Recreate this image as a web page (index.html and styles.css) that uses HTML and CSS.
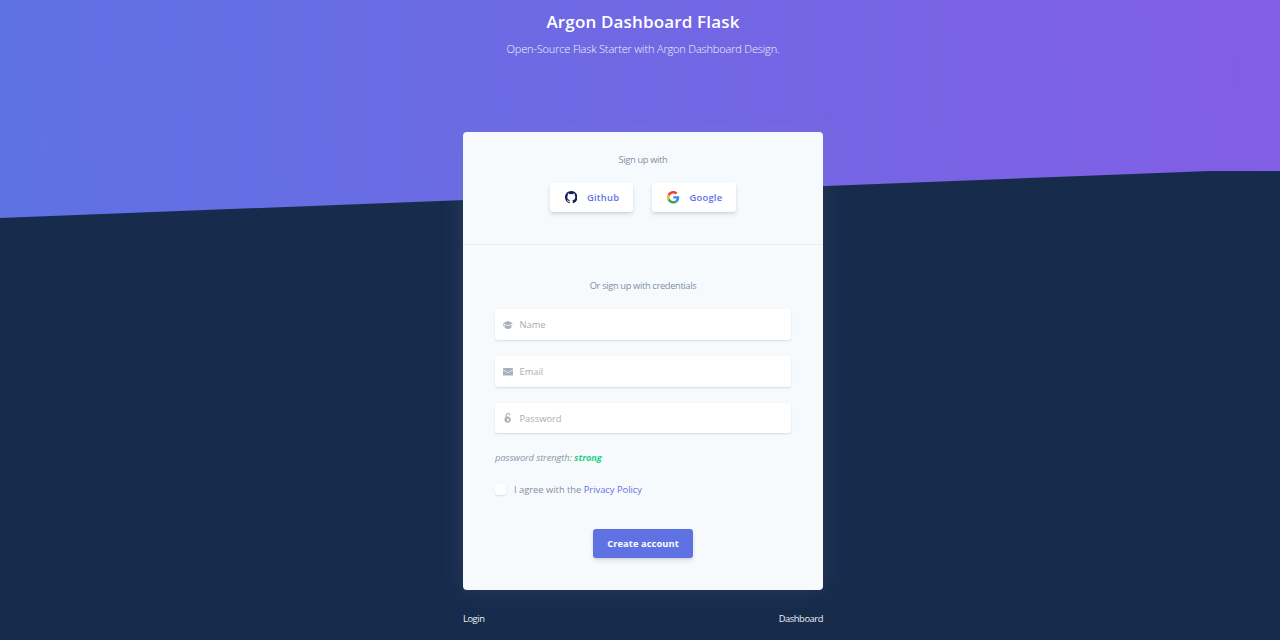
FILE: index.html
```html
<!DOCTYPE html>
<html lang="en">
<head>
<meta charset="utf-8">
<title>Argon Dashboard Flask</title>
<link rel="stylesheet" href="styles.css">
</head>
<body>
<div class="page">
  <header class="hero">
    <h1 class="hero-title">Argon Dashboard Flask</h1>
    <p class="hero-lead">Open-Source Flask Starter with Argon Dashboard Design.</p>
  </header>
  <main class="column">
    <section class="card">
      <div class="card-header">
        <p class="caption caption-signup">Sign up with</p>
        <div class="socials">
          <a class="social social-github">
            <svg class="social-icon" viewBox="0 0 16 16"><path fill="#161d5b" d="M8 0C3.58 0 0 3.58 0 8c0 3.54 2.29 6.53 5.47 7.59.4.07.55-.17.55-.38v-1.49c-2.01.37-2.53-.49-2.69-.94-.09-.23-.48-.94-.82-1.13-.28-.15-.68-.52-.01-.53.63-.01 1.08.58 1.23.82.72 1.21 1.87.87 2.33.66.07-.52.28-.87.51-1.07-1.78-.2-3.64-.89-3.64-3.95 0-.87.31-1.59.82-2.15-.08-.2-.36-1.02.08-2.12 0 0 .67-.21 2.2.82a7.42 7.42 0 0 1 4 0c1.53-1.04 2.2-.82 2.2-.82.44 1.1.16 1.92.08 2.12.51.56.82 1.27.82 2.15 0 3.07-1.87 3.75-3.65 3.95.29.25.54.73.54 1.48v2.2c0 .21.15.46.55.38A8.01 8.01 0 0 0 16 8c0-4.42-3.58-8-8-8z"/></svg>
            <span>Github</span>
          </a>
          <a class="social social-google">
            <svg class="social-icon" viewBox="0 0 48 48"><path fill="#ea4335" d="M24 9.5c3.54 0 6.71 1.22 9.21 3.6l6.85-6.85C35.9 2.38 30.47 0 24 0 14.62 0 6.51 5.38 2.56 13.22l7.98 6.19C12.43 13.72 17.74 9.5 24 9.5z"/><path fill="#4285f4" d="M46.98 24.55c0-1.57-.15-3.09-.38-4.55H24v9.02h12.94c-.58 2.96-2.26 5.48-4.78 7.18l7.73 6c4.51-4.18 7.09-10.36 7.09-17.65z"/><path fill="#fbbc05" d="M10.53 28.59a14.5 14.5 0 0 1 0-9.18l-7.98-6.19a24 24 0 0 0 0 21.56l7.98-6.19z"/><path fill="#34a853" d="M24 48c6.48 0 11.93-2.13 15.89-5.81l-7.73-6c-2.15 1.45-4.92 2.3-8.16 2.3-6.26 0-11.57-4.22-13.47-9.91l-7.98 6.19C6.51 42.62 14.62 48 24 48z"/></svg>
            <span>Google</span>
          </a>
        </div>
      </div>
      <form class="card-body">
        <p class="caption caption-or">Or sign up with credentials</p>
        <label class="field">
          <svg class="field-icon" viewBox="0 0 20 20"><path d="M10 2 0 6.500 10 11l10-4.500zM3 9.500v4.500C4.500 19 15.500 19 17 14V9.500l-7 3.200z"/><path d="M.5 7.500h1.800v5H.5z"/></svg>
          <span class="field-text">Name</span>
        </label>
        <label class="field">
          <svg class="field-icon" viewBox="0 0 20 20"><path d="M1 2h18q1 0 1 1v2.200l-10 5.600L0 5.200V3q0-1 1-1zM0 6.600l10 5.500 10-5.500V16q0 1-1 1H1q-1 0-1-1z"/></svg>
          <span class="field-text">Email</span>
        </label>
        <label class="field field-last">
          <svg class="field-icon" viewBox="0 0 20 20"><path fill-rule="evenodd" d="M5 8.500V5.500a5 5 0 0 1 10-1h-2.200a2.800 2.800 0 0 0-5.600 1V7.300Q8.500 7 10 7a6.500 6.300 0 1 1-5 1.500zM10 10.800a2 2 0 0 0-1 3.700V17h2v-2.500a2 2 0 0 0-1-3.700z"/></svg>
          <span class="field-text">Password</span>
        </label>
        <p class="strength">password strength: <b class="strong">strong</b></p>
        <div class="agree"><span class="checkbox"></span><span>I agree with the <a class="policy">Privacy Policy</a></span></div>
        <div class="actions"><button class="submit" type="button">Create account</button></div>
      </form>
    </section>
    <nav class="links"><a class="link-login">Login</a><a class="link-dashboard">Dashboard</a></nav>
  </main>
</div>
<svg class="backdrop" viewBox="0 0 1280 640" preserveAspectRatio="none"><path d="M0 218 1210 171H1280V640H0z"/></svg>
</body>
</html>
```
FILE: styles.css
```css
* { box-sizing: border-box; }
body {
  margin: 0;
  height: 640px;
  overflow: hidden;
  font-family: "Open Sans", "Noto Sans", sans-serif;
  font-size: 9.33px;
  line-height: 14px;
  color: #8898aa;
  background: linear-gradient(87deg, #5e72e4 0, #825ee4 100%) 0 0 / 1280px 218px no-repeat #172b4d;
}
p, h1 { margin: 0; }
.backdrop { position: absolute; inset: 0; width: 1280px; height: 640px; fill: #172b4d; }
.page { position: relative; z-index: 1; display: flex; flex-direction: column; align-items: center; padding-left: 6px; }
.hero { height: 132px; padding-top: 10px; text-align: center; color: #fff; }
.hero-title { font-size: 17px; line-height: 24px; font-weight: 600; letter-spacing: .16px; }
.hero-lead { margin-top: 6px; font-size: 11px; line-height: 18px; font-weight: 300; letter-spacing: -.17px; color: #f0f2f4; }
.column { width: 360px; }
.card { height: 458px; border-radius: 4px; background: #f7fafc; box-shadow: 0 0 24px rgba(136, 152, 170, .15); }
.card-header { height: 113px; padding-top: 21px; border-bottom: 1px solid #e9edf2; }
.caption { text-align: center; letter-spacing: -.36px; color: #8090a4; }
.socials { display: flex; justify-content: center; gap: 19px; margin-top: 16px; }
.social { display: flex; align-items: center; height: 29px; border-radius: 3px; background: #fff; color: #5e72e4; font-weight: 600; letter-spacing: .25px; box-shadow: 0 3px 4px rgba(50, 50, 93, .11), 0 1px 2px rgba(0, 0, 0, .08); }
.social-github { width: 83px; padding-left: 14.5px; gap: 10px; }
.social-google { width: 84px; padding-left: 15px; gap: 10px; }
.social-icon { width: 12.5px; height: 12.5px; flex: none; }
.card-body { padding: 34px 32px 0; }
.field { display: flex; align-items: center; height: 31px; padding-left: 7.5px; gap: 7px; margin-bottom: 16px; border-radius: 3px; background: #fff; color: #a5aeb7; box-shadow: 0 1px 2px rgba(50, 50, 93, .15); }
.caption-or { margin-bottom: 16px; }
.field-icon { width: 10px; height: 10px; fill: #a8b1b9; }
.field-last { height: 30px; }
.field-last .field-text { padding-top: 1px; }
.strength { margin-top: 18px; font-style: italic; letter-spacing: -.1px; }
.strong { color: #2dce89; font-weight: 700; }
.agree { display: flex; align-items: center; gap: 8px; margin-top: 18px; color: #8090a4; }
.checkbox { width: 11px; height: 11px; margin-bottom: 1px; border-radius: 3px; background: #fff; box-shadow: 0 1px 2px rgba(50, 50, 93, .15); }
.policy { color: #5e72e4; }
.actions { display: flex; justify-content: center; margin-top: 32px; }
.submit { width: 100px; height: 29px; padding: 0; border: 0; border-radius: 3px; background: #5e72e4; color: #fff; font: 700 9.33px/14px "Open Sans", sans-serif; letter-spacing: .08px; box-shadow: 0 3px 4px rgba(50, 50, 93, .11), 0 1px 2px rgba(0, 0, 0, .08); }
.links { display: flex; justify-content: space-between; margin-top: 22px; letter-spacing: -.43px; color: #eef0f3; }
```
